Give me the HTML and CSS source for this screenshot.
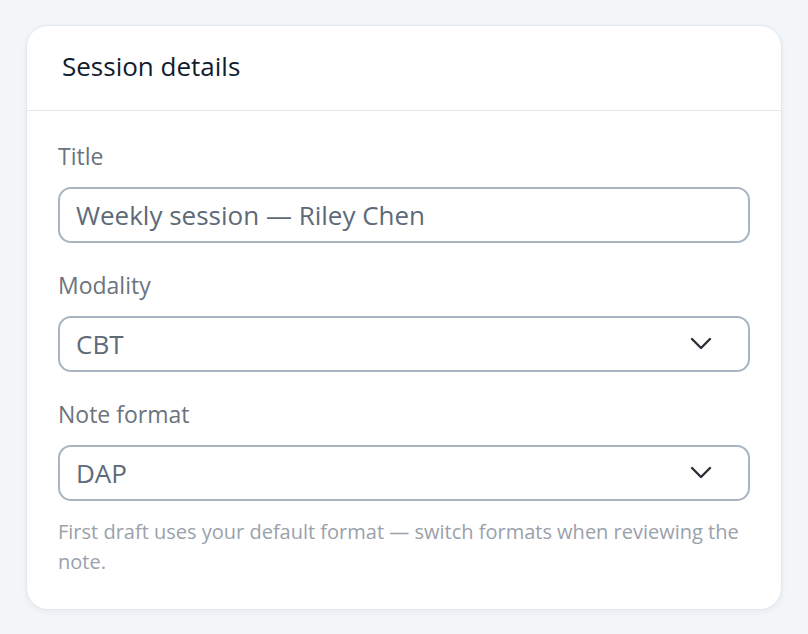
FILE: index.html
```html
<!DOCTYPE html>
<html lang="en">
<head>
<meta charset="utf-8">
<title>Session details</title>
<link rel="stylesheet" href="styles.css">
</head>
<body>
<section class="card">
  <header class="card-header">
    <h2 class="card-title">Session details</h2>
  </header>
  <div class="card-body">
    <div class="field">
      <label class="field-label" for="title">Title</label>
      <input class="control" id="title" type="text" value="Weekly session — Riley Chen">
    </div>
    <div class="field">
      <label class="field-label" for="modality">Modality</label>
      <div class="select-wrap">
        <select class="control select" id="modality">
          <option>CBT</option>
        </select>
        <svg class="chevron" width="22" height="14" viewBox="0 0 22 14" aria-hidden="true"><path d="M2 2 L11 11 L20 2" fill="none" stroke="currentColor" stroke-width="2.4" stroke-linecap="round" stroke-linejoin="round"/></svg>
      </div>
    </div>
    <div class="field">
      <label class="field-label" for="format">Note format</label>
      <div class="select-wrap">
        <select class="control select" id="format">
          <option>DAP</option>
        </select>
        <svg class="chevron" width="22" height="14" viewBox="0 0 22 14" aria-hidden="true"><path d="M2 2 L11 11 L20 2" fill="none" stroke="currentColor" stroke-width="2.4" stroke-linecap="round" stroke-linejoin="round"/></svg>
      </div>
      <p class="help">First draft uses your default format — switch formats when reviewing the note.</p>
    </div>
  </div>
</section>
</body>
</html>
```
FILE: styles.css
```css
* { box-sizing: border-box; }
html, body { margin: 0; padding: 0; }
body {
  background: #f3f6f9;
  font-family: "Open Sans", "Noto Sans", "Liberation Sans", sans-serif;
  padding: 25px 26px;
}
.card {
  width: 756px;
  height: 585px;
  background: #ffffff;
  border: 1px solid #e3e8ee;
  border-radius: 22px;
  box-shadow: 0 2px 6px rgba(15, 23, 42, 0.05);
}
.card-header {
  height: 85px;
  border-bottom: 1px solid #e2e8ee;
  display: flex;
  align-items: center;
  padding: 0 35px 4px;
}
.card-title {
  margin: 0;
  font-size: 26px;
  font-weight: 500;
  color: #111c2e;
  letter-spacing: 0;
}
.card-body {
  padding: 30px 31px 0;
  display: flex;
  flex-direction: column;
  gap: 27px;
}
.field {
  display: flex;
  flex-direction: column;
}
.field-label {
  font-size: 23px;
  line-height: 30px;
  color: #6b737d;
  margin-bottom: 16px;
}
.control {
  width: 100%;
  height: 56px;
  border: 2px solid #a9b6c1;
  border-radius: 13px;
  padding: 0 16px;
  font-family: inherit;
  font-size: 26px;
  color: #5e6a77;
  background: #ffffff;
  outline: none;
}
.select-wrap {
  position: relative;
}
.select {
  appearance: none;
  -webkit-appearance: none;
}
.chevron {
  position: absolute;
  right: 38px;
  top: 21px;
  color: #2b3138;
  pointer-events: none;
}
.help {
  margin: 16px 0 0;
  font-size: 20px;
  line-height: 30px;
  color: #9aa1aa;
}
```
